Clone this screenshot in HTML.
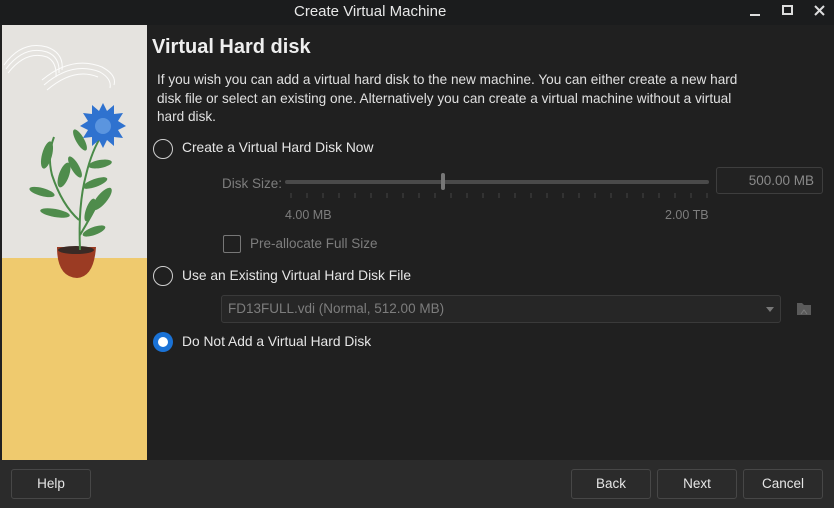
<!DOCTYPE html>
<html><head><meta charset="utf-8"><style>
*{margin:0;padding:0;box-sizing:border-box}
body{width:834px;height:508px;background:#202020;font-family:"Liberation Sans","DejaVu Sans",sans-serif;color:#e6e6e6;position:relative;overflow:hidden;font-size:13.5px}
.abs{position:absolute}
.title{left:294px;top:0;height:25px;line-height:23px;font-size:15px;color:#e8e8e8;white-space:nowrap}
.tbar{left:0;top:0;width:834px;height:25px;background:#1b1c1d}
.bottom{left:0;top:460px;width:834px;height:48px;background:#2b2b2b}
.btn{top:469px;height:30px;border:1px solid #474747;border-radius:3px;background:#2b2b2b;text-align:center;line-height:28px;font-size:13.5px;color:#e6e6e6}
.radio{width:20px;height:20px;border:1.5px solid #cfcfcf;border-radius:50%}
.lbl{font-size:13.8px;color:#e6e6e6;white-space:nowrap}
.dim{color:#7d7d7d;white-space:nowrap}
</style></head><body>
<div class="abs tbar"></div>
<div class="abs title">Create Virtual Machine</div>
<div class="abs" style="left:750px;top:5px;color:#ddd">
<div class="abs" style="left:0;top:9px;width:10px;height:2px;background:#ddd"></div>
<div class="abs" style="left:32px;top:0;width:11px;height:10px;border:2px solid #ddd"></div>
<svg class="abs" style="left:64px;top:0" width="11" height="11"><path d="M1 1L10 10M10 1L1 10" stroke="#ddd" stroke-width="2"/></svg>
</div>
<svg class="abs" style="left:2px;top:25px" width="145" height="435" viewBox="0 0 145 435">
<rect width="145" height="435" fill="#e5e3df"/>
<rect y="233" width="145" height="202" fill="#efca6e"/>
<g fill="none" stroke="#fff" stroke-width="1" opacity=".9">
<path d="M2 40 Q20 15 45 22 Q62 28 60 45"/><path d="M4 44 Q22 20 45 27 Q58 32 57 48"/><path d="M6 48 Q24 25 45 32 Q55 37 54 52"/>
<path d="M40 55 Q70 30 100 42 Q115 50 112 60"/><path d="M42 60 Q70 36 98 47 Q110 54 108 63"/><path d="M45 65 Q72 42 96 52"/>
</g>
<path d="M55 222 Q55 252 75 253 Q92 252 94 222 Z" fill="#9b3b23"/>
<ellipse cx="74" cy="225" rx="18" ry="4" fill="#3a2a25"/>
<g stroke="#4a8a48" stroke-width="2" fill="none"><path d="M78 225 Q76 180 84 150 Q90 125 100 110"/><path d="M77 195 Q60 180 50 150 Q45 130 52 112"/><path d="M78 210 Q90 190 100 170"/></g>
<g fill="#4f8c4c">
<ellipse cx="45" cy="130" rx="5" ry="14" transform="rotate(15 45 130)"/>
<ellipse cx="62" cy="150" rx="5" ry="13" transform="rotate(20 62 150)"/>
<ellipse cx="40" cy="167" rx="4" ry="13" transform="rotate(-75 40 167)"/>
<ellipse cx="53" cy="188" rx="4" ry="15" transform="rotate(-80 53 188)"/>
<ellipse cx="100" cy="174" rx="5" ry="14" transform="rotate(40 100 174)"/>
<ellipse cx="88" cy="185" rx="4" ry="12" transform="rotate(20 88 185)"/>
<ellipse cx="93" cy="158" rx="4" ry="13" transform="rotate(70 93 158)"/>
<ellipse cx="98" cy="139" rx="4" ry="12" transform="rotate(80 98 139)"/>
<ellipse cx="73" cy="142" rx="4" ry="12" transform="rotate(-30 73 142)"/>
<ellipse cx="78" cy="115" rx="4" ry="12" transform="rotate(-30 78 115)"/>
<ellipse cx="92" cy="206" rx="4" ry="12" transform="rotate(70 92 206)"/>
</g>
<polygon points="101,78 105,86 112,80 112,89 121,88 116,96 124,101 116,105 121,113 112,112 112,121 105,115 101,123 97,115 90,121 90,112 81,113 86,105 78,101 86,96 81,88 90,89 90,80 97,86" fill="#2f72cf"/>
<circle cx="101" cy="101" r="8" fill="#5b95df"/>
</svg>
<div class="abs" style="left:152px;top:36px;font-size:20px;font-weight:bold;color:#eee">Virtual Hard disk</div>
<div class="abs" style="left:157px;top:71px;width:615px;line-height:18.5px;font-size:13.6px;color:#e0e0e0">If you wish you can add a virtual hard disk to the new machine. You can either create a new hard<br>disk file or select an existing one. Alternatively you can create a virtual machine without a virtual<br>hard disk.</div>
<div class="abs radio" style="left:153px;top:139px"></div>
<div class="abs lbl" style="left:182px;top:140px">Create a Virtual Hard Disk Now</div>
<div class="abs dim" style="left:222px;top:176px">Disk Size:</div>
<div class="abs" style="left:285px;top:180px;width:424px;height:4px;border-radius:2px;background:#4a4a4a"></div>
<div class="abs" style="left:441px;top:173px;width:4px;height:17px;border-radius:2px;background:#777"></div>
<svg class="abs" style="left:290px;top:193px" width="420" height="6"><g stroke="#444" stroke-width="1">
<path d="M1 0v5M17 0v5M33 0v5M49 0v5M65 0v5M81 0v5M97 0v5M113 0v5M129 0v5M145 0v5M161 0v5M177 0v5M193 0v5M209 0v5M225 0v5M241 0v5M257 0v5M273 0v5M289 0v5M305 0v5M321 0v5M337 0v5M353 0v5M369 0v5M385 0v5M401 0v5M417 0v5"/></g></svg>
<div class="abs" style="left:716px;top:167px;width:107px;height:27px;border:1px solid #3e3e3e;border-radius:3px;background:#222;text-align:right;padding-right:8px;line-height:25px;color:#8a8a8a">500.00 MB</div>
<div class="abs dim" style="left:285px;top:208px;font-size:12.5px">4.00 MB</div>
<div class="abs dim" style="left:665px;top:208px;font-size:12.5px">2.00 TB</div>
<div class="abs" style="left:223px;top:235px;width:18px;height:18px;border:1.5px solid #777;border-radius:2px"></div>
<div class="abs dim" style="left:250px;top:236px">Pre-allocate Full Size</div>
<div class="abs radio" style="left:153px;top:266px"></div>
<div class="abs lbl" style="left:182px;top:268px">Use an Existing Virtual Hard Disk File</div>
<div class="abs" style="left:221px;top:295px;width:560px;height:28px;border:1px solid #3a3a3a;border-radius:3px;background:#262626;line-height:26px;padding-left:6px;color:#7d7d7d">FD13FULL.vdi (Normal, 512.00 MB)</div>
<div class="abs" style="left:766px;top:307px;width:0;height:0;border-left:4px solid transparent;border-right:4px solid transparent;border-top:5px solid #777"></div>
<svg class="abs" style="left:796px;top:300px" width="16" height="16"><path d="M1 3h5l2 2h7v10H1z" fill="#5a5a5a"/><path d="M5 14l3-4 3 4" stroke="#7a7a7a" fill="none"/></svg>
<div class="abs" style="left:153px;top:332px;width:20px;height:20px;border-radius:50%;background:#1a72d6"></div>
<div class="abs" style="left:158px;top:337px;width:10px;height:10px;border-radius:50%;background:#fff"></div>
<div class="abs lbl" style="left:182px;top:334px">Do Not Add a Virtual Hard Disk</div>
<div class="abs bottom"></div>
<div class="abs btn" style="left:11px;width:80px">Help</div>
<div class="abs btn" style="left:571px;width:80px">Back</div>
<div class="abs btn" style="left:657px;width:80px">Next</div>
<div class="abs btn" style="left:743px;width:80px">Cancel</div>
</body></html>
